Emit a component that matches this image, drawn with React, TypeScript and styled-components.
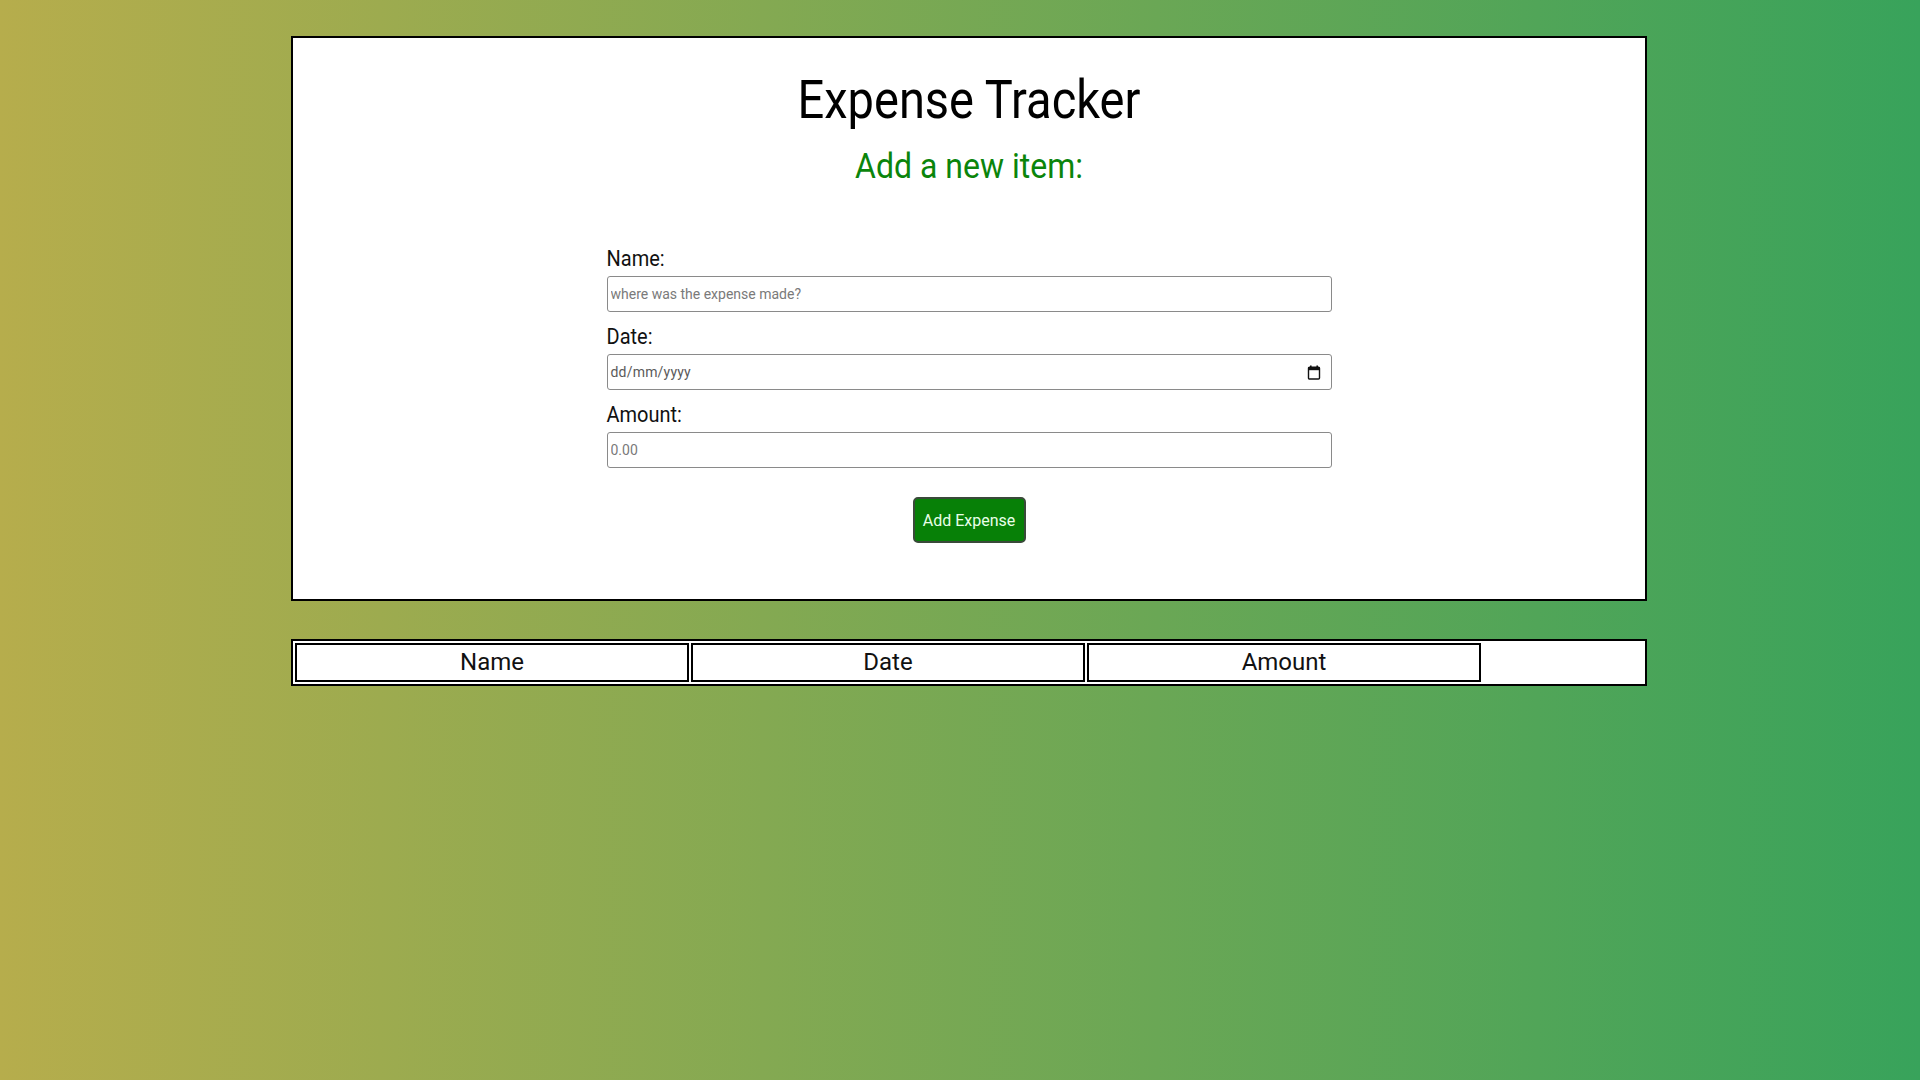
import React from "react";
import styled, { createGlobalStyle } from "styled-components";

const GlobalStyle = createGlobalStyle`
  html, body {
    margin: 0;
    padding: 0;
  }
  body {
    min-height: 100vh;
    font-family: Roboto, "Liberation Sans", Arial, sans-serif;
    background: linear-gradient(to right, #b6ad4c 0%, #38a35b 100%);
    background-attachment: fixed;
  }
`;

const Page = styled.div`
  min-height: 100vh;
  box-sizing: border-box;
  padding: 36px 0 0 291px;
`;

const Column = styled.div`
  width: 1356px;
  display: flex;
  flex-direction: column;
  gap: 38px;
`;

const Card = styled.section`
  box-sizing: border-box;
  background: #ffffff;
  border: 2px solid #000000;
  padding: 34px 0 56px;
  display: flex;
  flex-direction: column;
  align-items: center;
`;

const Title = styled.h1`
  margin: 0;
  font-family: Roboto, "Liberation Sans", sans-serif;
  font-weight: 400;
  font-size: 47px;
  line-height: 56px;
  color: #000000;
  transform: scaleY(1.14);
`;

const Subtitle = styled.h2`
  margin: 19px 0 0;
  font-family: Roboto, "Liberation Sans", sans-serif;
  font-weight: 400;
  font-size: 32px;
  line-height: 38px;
  color: #0b850b;
  transform: scaleY(1.08);
`;

const Form = styled.form`
  width: 725px;
  margin-top: 61px;
  display: flex;
  flex-direction: column;
`;

const Field = styled.div<{ $last?: boolean }>`
  display: flex;
  flex-direction: column;
  gap: 6px;
  margin-bottom: ${(p) => (p.$last ? "0" : "12px")};
`;

const Label = styled.label`
  font-family: Roboto, "Liberation Sans", sans-serif;
  font-size: 20px;
  line-height: 24px;
  color: #111111;
  transform-origin: left center;
  transform: scaleY(1.08);
`;

const Box = styled.div`
  box-sizing: border-box;
  height: 36px;
  border: 1px solid #8a8a8a;
  border-radius: 3px;
  background: #ffffff;
  display: flex;
  align-items: center;
  padding: 0 10px 0 3px;
`;

const TextInput = styled.input`
  flex: 1;
  min-width: 0;
  border: none;
  outline: none;
  padding: 0;
  background: transparent;
  font-family: Roboto, "Liberation Sans", sans-serif;
  font-size: 14px;
  color: #222222;
  &::placeholder {
    color: #7a7a7a;
  }
`;

const DateText = styled.span`
  flex: 1;
  font-family: Roboto, "Liberation Sans", sans-serif;
  font-size: 14px;
  color: #5a5a5a;
  letter-spacing: 0.2px;
`;

const Actions = styled.div`
  display: flex;
  justify-content: center;
  margin-top: 29px;
`;

const Button = styled.button`
  box-sizing: border-box;
  width: 113px;
  height: 46px;
  background: #078007;
  border: 2px solid #3a4a3a;
  border-radius: 5px;
  color: #e9ffe9;
  font-family: Roboto, "Liberation Sans", sans-serif;
  font-size: 16px;
  cursor: pointer;
`;

const Table = styled.table`
  width: 100%;
  box-sizing: border-box;
  background: #ffffff;
  border: 2px solid #000000;
  border-spacing: 2px;
  table-layout: fixed;
`;

const Th = styled.th<{ $empty?: boolean }>`
  width: ${(p) => (p.$empty ? "auto" : "390px")};
  border: ${(p) => (p.$empty ? "none" : "2px solid #000000")};
  padding: 3px 0 4px;
  font-family: Roboto, "Liberation Sans", sans-serif;
  font-weight: 400;
  font-size: 24px;
  line-height: 28px;
  color: #111111;
  text-align: center;
`;

const CalendarIcon = () => (
  <svg width="14" height="15" viewBox="0 0 14 15" aria-hidden="true">
    <rect x="3" y="0.5" width="1.6" height="3" fill="#111" />
    <rect x="9.4" y="0.5" width="1.6" height="3" fill="#111" />
    <rect x="1.5" y="2.2" width="11" height="11.8" rx="1" fill="none" stroke="#111" strokeWidth="1.4" />
    <rect x="1.5" y="2.2" width="11" height="3" fill="#111" />
  </svg>
);

export default function App() {
  return (
    <>
      <GlobalStyle />
      <Page>
        <Column>
          <Card>
            <Title>Expense Tracker</Title>
            <Subtitle>Add a new item:</Subtitle>
            <Form onSubmit={(e) => e.preventDefault()}>
              <Field>
                <Label htmlFor="name">Name:</Label>
                <Box>
                  <TextInput id="name" type="text" placeholder="where was the expense made?" />
                </Box>
              </Field>
              <Field>
                <Label htmlFor="date">Date:</Label>
                <Box>
                  <DateText id="date">dd/mm/yyyy</DateText>
                  <CalendarIcon />
                </Box>
              </Field>
              <Field $last>
                <Label htmlFor="amount">Amount:</Label>
                <Box>
                  <TextInput id="amount" type="text" placeholder="0.00" />
                </Box>
              </Field>
              <Actions>
                <Button type="submit">Add Expense</Button>
              </Actions>
            </Form>
          </Card>
          <Table>
            <thead>
              <tr>
                <Th>Name</Th>
                <Th>Date</Th>
                <Th>Amount</Th>
                <Th $empty />
              </tr>
            </thead>
          </Table>
        </Column>
      </Page>
    </>
  );
}
